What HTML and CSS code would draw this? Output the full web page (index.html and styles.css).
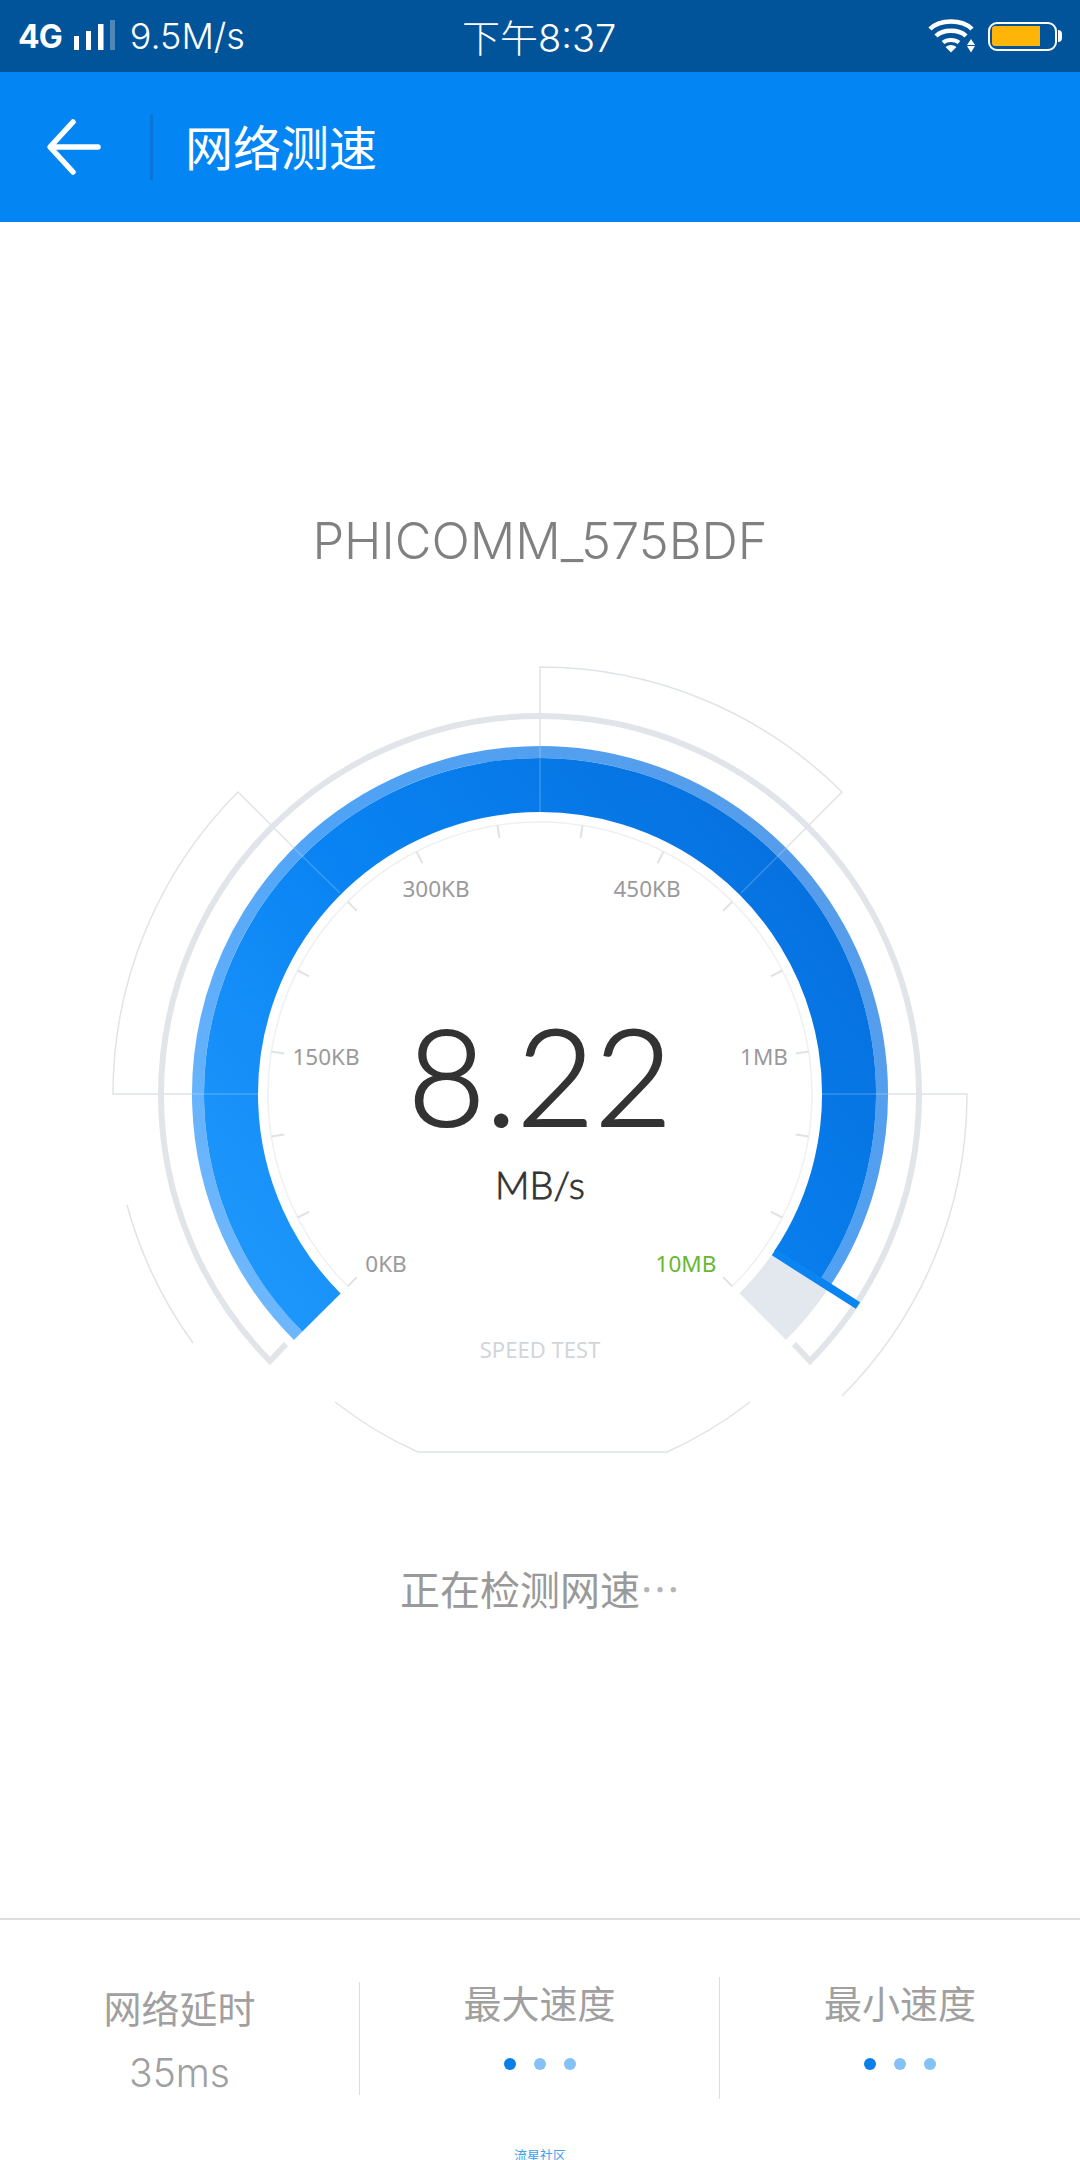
FILE: index.html
```html
<!DOCTYPE html>
<html>
<head>
    <title>网络测速</title>
    <meta http-equiv="Content-Type" content="text/html; charset=utf-8" />
    <link rel="stylesheet" href="styles.css">
</head>

<body>
    <div class="status-bar">
        <div class="status-left">
            <span class="net-type">4G</span>
            <svg class="signal" width="42" height="32" viewBox="0 0 42 32">
                <rect x="0" y="16" width="5" height="14" fill="#fff" />
                <rect x="12" y="11" width="5" height="19" fill="#fff" />
                <rect x="24" y="4" width="5.500" height="26" fill="#fff" />
                <rect x="36" y="0" width="5" height="30" fill="#fff" opacity="0.3" />
            </svg>
            <span class="net-speed">9.5M/s</span>
        </div>
        <div class="status-time">下午8:37</div>
        <div class="status-right">
            <svg class="wifi" width="48" height="36" viewBox="0 0 48 36">
                <path d="M2 11 C12 1 34 1 44 11" fill="none" stroke="#fff" stroke-width="4.500" />
                <path d="M8 18 C15 11 31 11 38 18" fill="none" stroke="#fff" stroke-width="4.500" />
                <path d="M15 24.500 C19 21 27 21 31 24.500" fill="none" stroke="#fff" stroke-width="4" />
                <path d="M17.500 29 Q23 25 28.500 29 L23 34.500 Z" fill="#fff" />
                <path d="M39 27 L43 21 L47 27 Z M39 28 H47 L43 34.500 Z" fill="#fff" />
            </svg>
            <div class="battery">
                <div class="battery-level"></div>
            </div>
            <div class="battery-nub"></div>
        </div>
    </div>

    <div class="app-bar">
        <svg class="back" width="56" height="58" viewBox="0 0 56 58">
            <path d="M52 29 H5 M27 4 L4 29 L27 54" fill="none" stroke="#fff" stroke-width="5.500" stroke-linecap="round" stroke-linejoin="round" />
        </svg>
        <div class="app-divider"></div>
        <div class="app-title">网络测速</div>
    </div>

    <div class="main">
        <h1 class="ssid">PHICOMM_575BDF</h1>

        <!-- viewBox usa as coordenadas da pagina, centro em 540,1094 -->
        <svg class="gauge" width="1080" height="820" viewBox="0 650 1080 820">
            <defs>
                <linearGradient id="ringMain" gradientUnits="userSpaceOnUse" x1="250" y1="1340" x2="830" y2="900">
                    <stop offset="0" stop-color="#2099fc" />
                    <stop offset="0.5" stop-color="#0983f3" />
                    <stop offset="1" stop-color="#0671df" />
                </linearGradient>
                <linearGradient id="ringEdge" gradientUnits="userSpaceOnUse" x1="250" y1="1340" x2="830" y2="900">
                    <stop offset="0" stop-color="#70b9fe" />
                    <stop offset="0.5" stop-color="#4fa3f6" />
                    <stop offset="1" stop-color="#559deb" />
                </linearGradient>
            </defs>

            <!-- linhas finas de fora -->
            <path class="thin" d="M540 812 V667 A427 427 0 0 1 842 792 L741 893" />
            <path class="thin" d="M258 1094 H113 A427 427 0 0 1 238 792 L339 893" />
            <path class="thin" d="M822 1094 H967 A427 427 0 0 1 842 1396" />
            <path class="thin" d="M127 1205 A427 427 0 0 0 193 1343" />
            <path class="thin" d="M335 1402 A400 400 0 0 0 418 1452 H667 A400 400 0 0 0 750 1402" />

            <path class="outer-ring" d="M286 1344 L270 1361 A379 379 0 1 1 810 1361 L794 1344" />

            <path class="rest" d="M801.100 1270.100 A315 315 0 0 1 762.700 1316.700" />
            <path class="edge" d="M298.200 1335.800 A342 342 0 1 1 823.500 1285.200" />
            <path class="fill" d="M321.500 1312.500 A309 309 0 1 1 796.200 1266.800" />

            <path class="over" d="M540 746 V812 M294 848 L340 893 M786 848 L741 893 M192 1094 H258 M822 1094 H888" />
            <path class="needle" d="M774 1252 L858 1305.500" />

            <!-- escala -->
            <path class="scale" d="M347.700 1286.300 A272 272 0 1 1 732.300 1286.300" />
            <g class="ticks">
                <line x1="540" y1="822" x2="540" y2="835" transform="rotate(-135 540 1094)" />
                <line x1="540" y1="822" x2="540" y2="835" transform="rotate(-117 540 1094)" />
                <line x1="540" y1="822" x2="540" y2="835" transform="rotate(-99 540 1094)" />
                <line x1="540" y1="822" x2="540" y2="835" transform="rotate(-81 540 1094)" />
                <line x1="540" y1="822" x2="540" y2="835" transform="rotate(-63 540 1094)" />
                <line x1="540" y1="822" x2="540" y2="835" transform="rotate(-45 540 1094)" />
                <line x1="540" y1="822" x2="540" y2="835" transform="rotate(-27 540 1094)" />
                <line x1="540" y1="822" x2="540" y2="835" transform="rotate(-9 540 1094)" />
                <line x1="540" y1="822" x2="540" y2="835" transform="rotate(9 540 1094)" />
                <line x1="540" y1="822" x2="540" y2="835" transform="rotate(27 540 1094)" />
                <line x1="540" y1="822" x2="540" y2="835" transform="rotate(45 540 1094)" />
                <line x1="540" y1="822" x2="540" y2="835" transform="rotate(63 540 1094)" />
                <line x1="540" y1="822" x2="540" y2="835" transform="rotate(81 540 1094)" />
                <line x1="540" y1="822" x2="540" y2="835" transform="rotate(99 540 1094)" />
                <line x1="540" y1="822" x2="540" y2="835" transform="rotate(117 540 1094)" />
                <line x1="540" y1="822" x2="540" y2="835" transform="rotate(135 540 1094)" />
            </g>

            <text class="mark" x="436" y="897">300KB</text>
            <text class="mark" x="647" y="897">450KB</text>
            <text class="mark" x="326" y="1065">150KB</text>
            <text class="mark" x="764" y="1065">1MB</text>
            <text class="mark" x="386" y="1272">0KB</text>
            <text class="mark mark-top" x="686" y="1272">10MB</text>
            <text class="speed-value" x="540" y="1126">8.22</text>
            <text class="speed-unit" x="540" y="1199">MB/s</text>
            <text class="speed-test" x="540" y="1358">SPEED TEST</text>
        </svg>

        <p class="checking">正在检测网速<span class="checking-dots">⋯</span></p>
    </div>

    <div class="stats">
        <div class="stat stat-first">
            <div class="stat-name">网络延时</div>
            <div class="stat-value">35ms</div>
        </div>
        <div class="stat-line"></div>
        <div class="stat">
            <div class="stat-name">最大速度</div>
            <div class="dots"><i class="on"></i><i></i><i></i></div>
        </div>
        <div class="stat-line stat-line-long"></div>
        <div class="stat">
            <div class="stat-name">最小速度</div>
            <div class="dots"><i class="on"></i><i></i><i></i></div>
        </div>
    </div>

    <div class="watermark">流星社区</div>
</body>

</html>
```

FILE: styles.css
```css
html, body {
    margin: 0;
    height: 2160px;
    overflow: hidden;
}

body {
    width: 1080px;
    display: flex;
    flex-direction: column;
    background-color: #ffffff;
    font-family: Inter, "Noto Sans CJK SC", sans-serif;
}

/* barra de status */
.status-bar {
    height: 72px;
    background-color: #02549a;
    color: #ffffff;
    display: flex;
    align-items: center;
    flex: none;
}

.status-left {
    display: flex;
    align-items: center;
    padding-left: 18px;
}

.net-type {
    font-size: 32px;
    font-weight: 700;
    letter-spacing: -1px;
}

.signal {
    margin-left: 12px;
}

.net-speed {
    font-size: 36px;
    font-weight: 300;
    margin-left: 14px;
}

.status-time {
    font-size: 38px;
    font-weight: 300;
    margin-left: 217px;
    margin-top: -2px;
    white-space: nowrap;
}

.status-right {
    display: flex;
    align-items: center;
    margin-left: auto;
    padding-right: 18px;
}

.wifi {
    margin-right: 12px;
}

.battery {
    width: 58px;
    height: 20px;
    border: 2.500px solid #ffffff;
    border-radius: 9px;
    padding: 2.500px 5px 2.500px 2.500px;
}

.battery-level {
    width: 48px;
    height: 20px;
    background-color: #ffb507;
    border-radius: 3px 0 0 3px;
}

.battery-nub {
    width: 4px;
    height: 12px;
    background-color: #ffffff;
    border-radius: 0 4px 4px 0;
    margin-left: 1px;
}

/* barra do app */
.app-bar {
    height: 150px;
    background-color: #0385f4;
    display: flex;
    align-items: center;
    flex: none;
}

.back {
    margin-left: 46px;
}

.app-divider {
    width: 3px;
    height: 66px;
    background-color: #0a75d9;
    margin-left: 48px;
}

.app-title {
    color: #ffffff;
    font-size: 48px;
    margin-left: 32px;
    margin-top: -4px;
}

/* area central */
.main {
    flex: 1;
    display: flex;
    flex-direction: column;
    align-items: center;
}

.ssid {
    margin: 290px 0 0;
    height: 138px;
    font-size: 50.500px;
    line-height: 58px;
    font-weight: 300;
    color: #808080;
}

.gauge {
    display: block;
    flex: none;
}

.thin {
    fill: none;
    stroke: #e0e4e8;
    stroke-width: 1.500;
}

.outer-ring {
    fill: none;
    stroke: #e1e5e9;
    stroke-width: 6;
}

.rest {
    fill: none;
    stroke: #e3e8ee;
    stroke-width: 66;
}

.edge {
    fill: none;
    stroke: url(#ringEdge);
    stroke-width: 12;
}

.fill {
    fill: none;
    stroke: url(#ringMain);
    stroke-width: 54;
}

.over {
    fill: none;
    stroke: #ffffff;
    stroke-opacity: 0.2;
    stroke-width: 1.500;
}

.needle {
    fill: none;
    stroke: #0a84f0;
    stroke-width: 8;
}

.scale {
    fill: none;
    stroke: #eef0f3;
    stroke-width: 1.500;
}

.ticks line {
    stroke: #dfe2e6;
    stroke-width: 2;
}

.mark {
    font-family: "Noto Sans", sans-serif;
    font-size: 22.500px;
    fill: #9a9a9a;
    text-anchor: middle;
}

.mark-top {
    fill: #67b832;
}

.speed-value {
    font-family: Lato, sans-serif;
    font-size: 134px;
    font-weight: 300;
    fill: #333333;
    stroke: #333333;
    stroke-width: 2;
    text-anchor: middle;
}

.speed-unit {
    font-family: Lato, sans-serif;
    font-size: 38px;
    font-weight: 300;
    fill: #333333;
    stroke: #333333;
    stroke-width: 0.800;
    text-anchor: middle;
}

.speed-test {
    font-family: "Noto Sans", sans-serif;
    font-size: 22px;
    fill: #d2d5d8;
    text-anchor: middle;
}

.checking {
    margin: 90px 0 0;
    font-size: 40px;
    line-height: 56px;
    color: #999999;
}

.checking-dots {
    font-family: "Noto Sans CJK SC", sans-serif;
    color: #b5b5b5;
}

/* rodape */
.stats {
    height: 240px;
    border-top: 2px solid #dddddd;
    display: grid;
    grid-template-columns: 359px 1px 359px 1px 1fr;
    flex: none;
}

.stat {
    text-align: center;
    color: #a0a0a0;
    padding-top: 59px;
}

.stat-first {
    padding-top: 64px;
}

.stat-name {
    font-size: 38px;
    line-height: 50px;
}

.stat-value {
    font-size: 39px;
    font-weight: 300;
    line-height: 50px;
    margin-top: 14px;
}

.stat-line {
    height: 113px;
    background-color: #dddddd;
    margin-top: 62px;
}

.stat-line-long {
    height: 122px;
    margin-top: 57px;
}

.dots {
    display: flex;
    justify-content: center;
    gap: 18px;
    margin-top: 29px;
}

.dots i {
    width: 12px;
    height: 12px;
    border-radius: 50%;
    background-color: #85c1f5;
}

.dots i.on {
    background-color: #0a7fe8;
}

.watermark {
    position: absolute;
    left: 0;
    right: 0;
    top: 2146px;
    text-align: center;
    font-size: 13px;
    line-height: 18px;
    color: #3ea0ee;
}
```
